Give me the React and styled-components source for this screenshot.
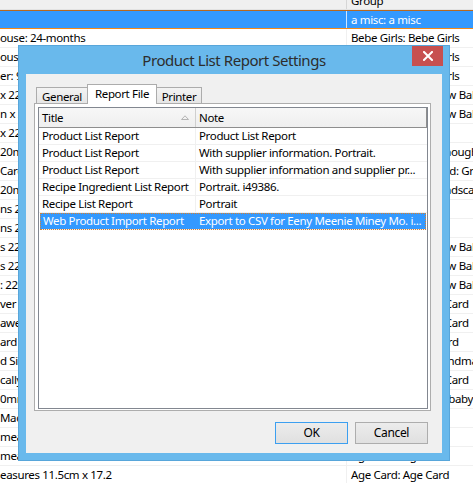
import React from 'react';
import styled, { createGlobalStyle, css } from 'styled-components';

const GlobalStyle = createGlobalStyle`
    html, body {
        margin: 0;
        padding: 0;
        background: #ffffff;
        overflow: hidden;
    }

    body {
        font-family: "Segoe UI", "Noto Sans", "DejaVu Sans", sans-serif;
        font-size: 11.5px;
        letter-spacing: -0.35px;
        color: #000000;
    }
`;

const backgroundRows = [
    ['', 'a misc: a misc'],
    ['ouse: 24-months', 'Bebe Girls: Bebe Girls'],
    ['ouse: 12-18 months', 'Bebe Girls: Bebe Girls'],
    ['er: 9 months', 'Bebe Girls: Bebe Girls'],
    ['x 220mm', 'New Baby Gifts: New Baby'],
    ['n x 220mm', 'New Baby Gifts: New Baby'],
    ['x 220mm', ''],
    ['20mm', 'Thinking of You - Thought'],
    ['Card', 'Graduation Gift Card: Graduation'],
    ['20mm', 'Greeting Cards: Landscape'],
    ['ns 220mm', ''],
    ['ns 220mm', ''],
    ['s 220mm', 'New Baby Gifts: New Baby'],
    ['s 220mm', 'New Baby Gifts: New Baby'],
    [': 220mm', 'New Baby Gifts: New Baby'],
    ['ver card', 'Birthday Card: Kid Card'],
    ['awer', 'Birthday Card: Kid Card'],
    ['ard 1', 'Birthday Card: 1 Card'],
    ['d Size', "Grandparents': Grandma"],
    ['cally', 'Birthday Card: Kid Card'],
    ['0mm', 'Baby Shower: New baby'],
    ['Made', ''],
    ['measures', ''],
    ['measures', 'Age Card: Age Card'],
    ['easures 11.5cm x 17.2', 'Age Card: Age Card'],
];

const reports = [
    ['Product List Report', 'Product List Report'],
    ['Product List Report', 'With supplier information. Portrait.'],
    ['Product List Report', 'With supplier information and supplier pr...'],
    ['Recipe Ingredient List Report', 'Portrait. i49386.'],
    ['Recipe List Report', 'Portrait'],
    ['Web Product Import Report', 'Export to CSV for Eeny Meenie Miney Mo. i...'],
];

const StyledScreen = styled.div`
    position: relative;
    width: 473px;
    height: 483px;
    overflow: hidden;
    background: #ffffff;
`;

const StyledGrid = styled.div`
    display: flex;
    flex-direction: column;
    margin-top: -9px;
`;

const StyledGridHeader = styled.div`
    display: grid;
    grid-template-columns: 347px 1fr;
    height: 19px;
    box-sizing: border-box;
    background: #f0f0f0;
    border-bottom: 1px solid #e3e3e3;
`;

const StyledGridHeaderCell = styled.div`
    padding: 1px 0 0 4px;
    line-height: 17px;
    white-space: nowrap;
    overflow: hidden;

    &:first-child {
        border-right: 1px solid #d6d6d6;
    }
`;

const StyledGridRow = styled.div`
    display: grid;
    grid-template-columns: 347px 1fr;
    height: 19px;
    box-sizing: border-box;
    border-bottom: 1px solid #f0f0f0;

    ${({ isSelected }) => isSelected && css`
        background: #3399ff;
        color: #ffffff;
        border-top: 1px solid #b8681f;
        border-bottom: 1px solid #f08a1c;
    `}
`;

const StyledGridCell = styled.div`
    padding-left: 4px;
    line-height: 18px;
    white-space: nowrap;
    overflow: hidden;

    &:first-child {
        padding-left: 0;
        border-right: 1px solid ${({ isSelected }) => (isSelected ? '#cfe6ff' : '#f0f0f0')};
    }
`;

const StyledDialog = styled.div`
    position: absolute;
    left: 18px;
    top: 45px;
    width: 432px;
    height: 416px;
    box-sizing: border-box;
    display: flex;
    flex-direction: column;
    padding: 0 7px 7px;
    background: #69b9ec;
    border: 1px solid #58a6da;
`;

const StyledTitleBar = styled.div`
    height: 28px;
    display: flex;
    align-items: center;
    justify-content: center;
    font-size: 15px;
    letter-spacing: -0.45px;
    color: #2d2d2d;
    padding-bottom: 1px;
    box-sizing: border-box;
`;

const StyledCloseButton = styled.button`
    position: absolute;
    top: 0;
    right: 6px;
    width: 31px;
    height: 20px;
    padding: 0;
    border: none;
    background: #c75050;
    display: flex;
    align-items: center;
    justify-content: center;
    cursor: pointer;
`;

const StyledClient = styled.div`
    flex: 1;
    display: flex;
    flex-direction: column;
    padding: 10px 11px 0 8px;
    background: #f0f0f0;
`;

const StyledTabStrip = styled.div`
    display: flex;
    align-items: flex-end;
    height: 19px;
    padding-left: 2px;
`;

const StyledTab = styled.div`
    height: 16px;
    box-sizing: border-box;
    display: flex;
    align-items: center;
    justify-content: center;
    width: ${({ width }) => width}px;
    background: linear-gradient(#f3f3f3, #e6e6e6);
    border: 1px solid #acacac;
    border-bottom: none;
    padding-top: 1px;

    ${({ isActive }) => isActive && css`
        position: relative;
        z-index: 1;
        height: 20px;
        margin-bottom: -1px;
        background: #ffffff;
        padding-top: 0;
        padding-bottom: 2px;
    `}

    ${({ noLeft }) => noLeft && css`
        border-left: none;
    `}

    ${({ noRight }) => noRight && css`
        border-right: none;
    `}
`;

const StyledTabPanel = styled.div`
    height: 308px;
    box-sizing: border-box;
    display: flex;
    flex-direction: column;
    padding: 3px 2px 1px 3px;
    background: #ffffff;
    border: 1px solid #adadad;
`;

const StyledListView = styled.div`
    flex: 1;
    display: flex;
    flex-direction: column;
    border: 1px solid #828790;
    background: #ffffff;
`;

const StyledListHeader = styled.div`
    display: grid;
    grid-template-columns: 157px 1fr;
    height: 20px;
    box-sizing: border-box;
    background: linear-gradient(#f7f7f7, #efefef);
    border-bottom: 1px solid #8e8e8e;
    border-right: 1px solid #8e8e8e;
`;

const StyledListHeaderCell = styled.div`
    display: flex;
    align-items: center;
    justify-content: space-between;
    padding: 0 6px 1px 3px;

    &:first-child {
        border-right: 1px solid #cfcfcf;
    }
`;

const StyledListRow = styled.div`
    display: grid;
    grid-template-columns: 157px 1fr;
    height: 17px;
    box-sizing: border-box;
    border-bottom: 1px solid #f0f0f0;

    ${({ isSelected }) => isSelected && css`
        margin: 0 1px;
        grid-template-columns: 156px 1fr;
        background: #3399ff;
        color: #ffffff;
        outline: 1px dotted #d9812e;
        outline-offset: -1px;
    `}
`;

const StyledListCell = styled.div`
    padding-left: 3px;
    line-height: 16px;
    white-space: nowrap;
    overflow: hidden;
    text-overflow: ellipsis;

    &:first-child {
        border-right: 1px solid ${({ isSelected }) => (isSelected ? '#3399ff' : '#f0f0f0')};
    }
`;

const StyledButtonRow = styled.div`
    display: flex;
    justify-content: flex-end;
    gap: 7px;
    margin-top: 11px;
    padding-right: 3px;
`;

const StyledButton = styled.button`
    width: 73px;
    height: 22px;
    padding: 0 0 1px;
    font-family: inherit;
    font-size: 12px;
    letter-spacing: inherit;
    color: #000000;
    background: linear-gradient(#ececec, #e0e0e0);
    border: 1px solid ${({ isDefault }) => (isDefault ? '#3c9ff0' : '#adadad')};
    cursor: pointer;
`;

function SortArrow () {
    return (
        <svg width="8" height="5" viewBox="0 0 8 5">
            <path d="M0.5 4.5 L4 0.8 L7.5 4.5 Z" fill="none" stroke="#b5b5b5" strokeWidth="1" />
        </svg>
    );
}

function CloseIcon () {
    return (
        <svg width="10" height="10" viewBox="0 0 10 10">
            <path d="M1 1 L9 9 M9 1 L1 9" stroke="#ffffff" strokeWidth="2" strokeLinecap="square" />
        </svg>
    );
}

function BackgroundGrid () {
    return (
        <StyledGrid>
            <StyledGridHeader>
                <StyledGridHeaderCell />
                <StyledGridHeaderCell>Group</StyledGridHeaderCell>
            </StyledGridHeader>
            {
                backgroundRows.map(([description, group], index) => {
                    const isSelected = index === 0;
                    return (
                        <StyledGridRow isSelected={isSelected} key={index}>
                            <StyledGridCell isSelected={isSelected}>{description}</StyledGridCell>
                            <StyledGridCell>{group}</StyledGridCell>
                        </StyledGridRow>
                    );
                })
            }
        </StyledGrid>
    );
}

function ReportSettingsDialog () {
    const [selectedIndex, setSelectedIndex] = React.useState(5);

    return (
        <StyledDialog>
            <StyledTitleBar>Product List Report Settings</StyledTitleBar>
            <StyledCloseButton aria-label="Close">
                <CloseIcon />
            </StyledCloseButton>
            <StyledClient>
                <StyledTabStrip>
                    <StyledTab width={51} noRight>General</StyledTab>
                    <StyledTab width={70} isActive>Report File</StyledTab>
                    <StyledTab width={45} noLeft>Printer</StyledTab>
                </StyledTabStrip>
                <StyledTabPanel>
                    <StyledListView>
                        <StyledListHeader>
                            <StyledListHeaderCell>
                                <span>Title</span>
                                <SortArrow />
                            </StyledListHeaderCell>
                            <StyledListHeaderCell>
                                <span>Note</span>
                            </StyledListHeaderCell>
                        </StyledListHeader>
                        {
                            reports.map(([title, note], index) => {
                                const isSelected = index === selectedIndex;
                                return (
                                    <StyledListRow
                                        isSelected={isSelected}
                                        onClick={() => { setSelectedIndex(index); }}
                                        key={index}
                                    >
                                        <StyledListCell isSelected={isSelected}>{title}</StyledListCell>
                                        <StyledListCell>{note}</StyledListCell>
                                    </StyledListRow>
                                );
                            })
                        }
                    </StyledListView>
                </StyledTabPanel>
                <StyledButtonRow>
                    <StyledButton isDefault>OK</StyledButton>
                    <StyledButton>Cancel</StyledButton>
                </StyledButtonRow>
            </StyledClient>
        </StyledDialog>
    );
}

export default function App () {
    return (
        <>
            <GlobalStyle />
            <StyledScreen>
                <BackgroundGrid />
                <ReportSettingsDialog />
            </StyledScreen>
        </>
    );
}
